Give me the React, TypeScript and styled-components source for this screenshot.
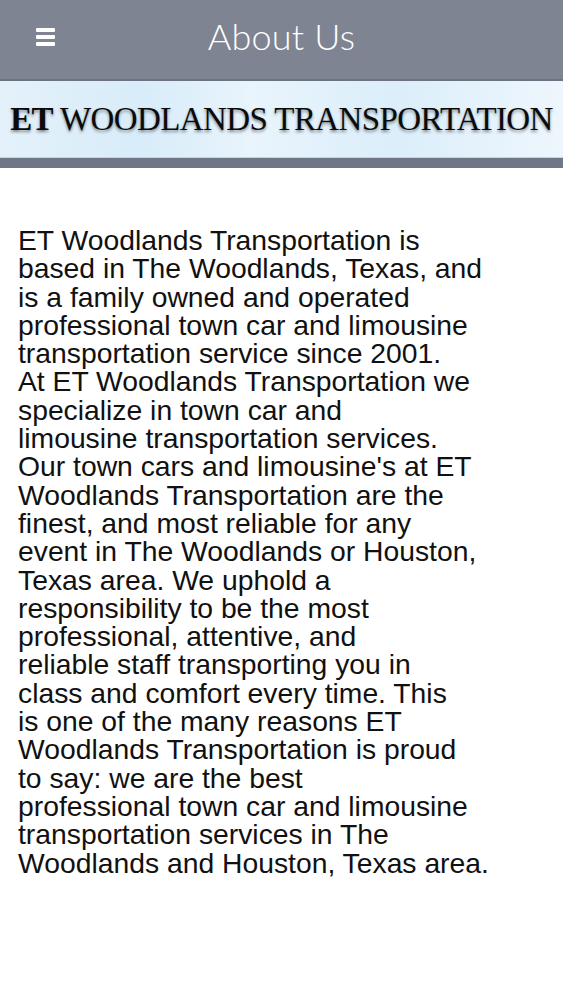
import React from "react";
import styled, {createGlobalStyle} from "styled-components";

const GlobalStyle = createGlobalStyle`
  html, body {
    margin: 0;
    padding: 0;
    background: #ffffff;
  }
`;

const Page = styled.div`
  display: flex;
  flex-direction: column;
  width: 563px;
  min-height: 1000px;
  background: #ffffff;
`;

const TopBar = styled.header`
  position: relative;
  display: flex;
  align-items: center;
  justify-content: center;
  height: 81px;
  padding-bottom: 8px;
  box-sizing: border-box;
  background: #7e8492;
  border-bottom: 2px solid #6b7282;
`;

const MenuButton = styled.button`
  position: absolute;
  left: 36px;
  top: 28px;
  display: flex;
  flex-direction: column;
  gap: 3px;
  padding: 0;
  border: none;
  background: none;
`;

const MenuLine = styled.span`
  display: block;
  width: 19px;
  height: 4px;
  background: #ffffff;
  border-radius: 1px;
`;

const Title = styled.h1`
  margin: 0;
  font-family: "Lato", "Open Sans", sans-serif;
  font-weight: 300;
  font-size: 36px;
  letter-spacing: 0.2px;
  color: #ffffff;
`;

const Banner = styled.div`
  display: flex;
  align-items: center;
  justify-content: center;
  height: 76px;
  background: linear-gradient(
    90deg,
    #e4f1fa 0%,
    #d8ecf9 25%,
    #e9f4fc 45%,
    #dbeefa 70%,
    #eef6fd 100%
  );
  border-bottom: 1px solid #c9d3dc;
`;

const BannerText = styled.div`
  font-family: "Liberation Serif", "Times New Roman", serif;
  font-size: 33px;
  letter-spacing: -0.6px;
  color: #0b0b0b;
  white-space: nowrap;
  text-shadow: 0 2px 3px rgba(0, 0, 0, 0.45);
  b {
    font-weight: 700;
  }
`;

const DarkStrip = styled.div`
  height: 10px;
  background: #6f7686;
`;

const Body = styled.main`
  padding: 58px 18px 0 18px;
`;

const Paragraph = styled.p`
  margin: 0;
  font-family: "Liberation Sans", Arial, sans-serif;
  font-size: 28.3px;
  line-height: 28.3px;
  color: #111111;
`;

const Line = styled.span`
  display: block;
  white-space: nowrap;
`;

const lines = [
  "ET Woodlands Transportation is",
  "based in The Woodlands, Texas, and",
  "is a family owned and operated",
  "professional town car and limousine",
  "transportation service since 2001.",
  "At ET Woodlands Transportation we",
  "specialize in town car and",
  "limousine transportation services.",
  "Our town cars and limousine's at ET",
  "Woodlands Transportation are the",
  "finest, and most reliable for any",
  "event in The Woodlands or Houston,",
  "Texas area. We uphold a",
  "responsibility to be the most",
  "professional, attentive, and",
  "reliable staff transporting you in",
  "class and comfort every time. This",
  "is one of the many reasons ET",
  "Woodlands Transportation is proud",
  "to say: we are the best",
  "professional town car and limousine",
  "transportation services in The",
  "Woodlands and Houston, Texas area.",
];

const App: React.FC = () => {
  return (
    <Page>
      <GlobalStyle />
      <TopBar>
        <MenuButton aria-label="menu">
          <MenuLine />
          <MenuLine />
          <MenuLine />
        </MenuButton>
        <Title>About Us</Title>
      </TopBar>
      <Banner>
        <BannerText>
          <b>ET</b> WOODLANDS TRANSPORTATION
        </BannerText>
      </Banner>
      <DarkStrip />
      <Body>
        <Paragraph>
          {lines.map((l) => (
            <Line key={l}>{l}</Line>
          ))}
        </Paragraph>
      </Body>
    </Page>
  );
};

export default App;
